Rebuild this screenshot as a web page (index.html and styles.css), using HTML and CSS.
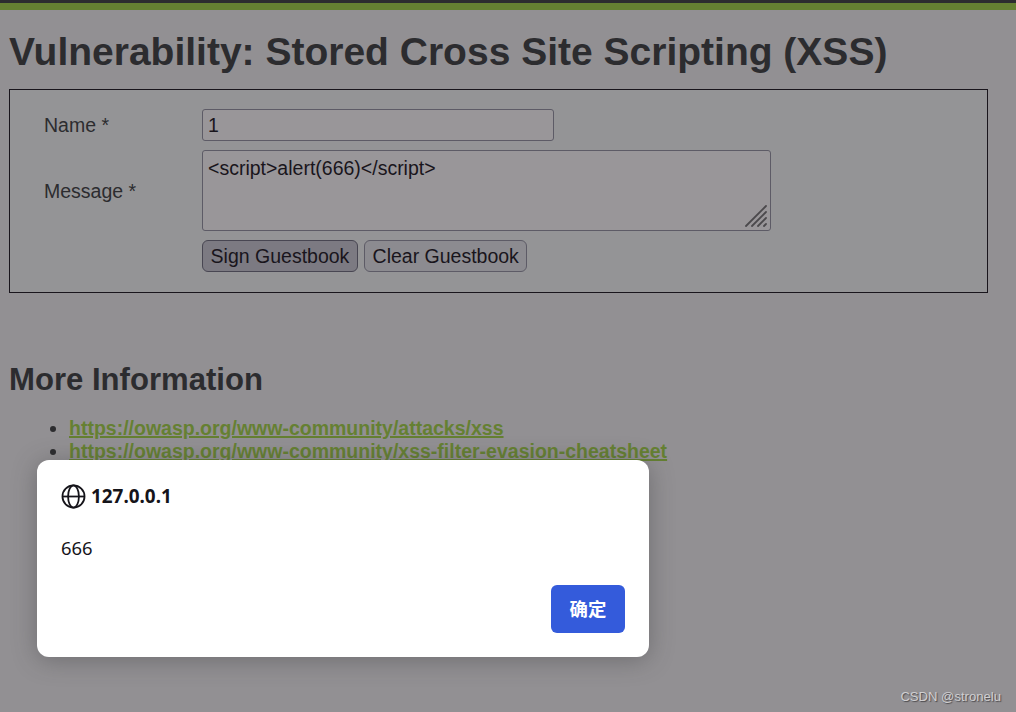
FILE: index.html
```html
<!DOCTYPE html>
<html lang="en">
<head>
    <meta charset="UTF-8">
    <meta name="viewport" content="width=device-width, initial-scale=1.0">
    <title>Vulnerability: Stored Cross Site Scripting (XSS)</title>
    <link rel="stylesheet" href="styles.css">
</head>
<body>
    <header class="top-bar"></header>

    <main class="content">
        <h1>Vulnerability: Stored Cross Site Scripting (XSS)</h1>

        <form class="guestbook">
            <label for="name">Name *</label>
            <input type="text" id="name" value="1">

            <label for="message" class="message-label">Message *</label>
            <div class="message-box">
                <textarea id="message">&lt;script&gt;alert(666)&lt;/script&gt;</textarea>
                <svg class="resizer" viewBox="0 0 24 24">
                    <path d="M2 22 22 2M8 22 22 8M14 22 22 14M20 22 22 20"/>
                </svg>
            </div>

            <div class="buttons">
                <button type="button" class="active">Sign Guestbook</button>
                <button type="button">Clear Guestbook</button>
            </div>
        </form>

        <h2>More Information</h2>
        <ul class="links">
            <li><a href="#">https://owasp.org/www-community/attacks/xss</a></li>
            <li><a href="#">https://owasp.org/www-community/xss-filter-evasion-cheatsheet</a></li>
        </ul>
    </main>

    <!-- Alert dialog -->
    <div class="dialog">
        <div class="dialog-title">
            <svg class="globe" viewBox="0 0 24 24">
                <circle cx="12" cy="12" r="10.6"/>
                <ellipse cx="12" cy="12" rx="5.2" ry="10.6"/>
                <path d="M1.4 12h21.2"/>
            </svg>
            <span>127.0.0.1</span>
        </div>
        <div class="dialog-text">666</div>
        <button type="button" class="ok-button" lang="zh-CN">确定</button>
    </div>

    <div class="watermark">CSDN @stronelu</div>
</body>
</html>
```

FILE: styles.css
```css
* {
    box-sizing: border-box;
}

body {
    margin: 0;
    height: 712px;
    overflow: hidden;
    background-color: #929093;
    color: #2c2c2f;
    font-family: "Liberation Sans", Arial, sans-serif;
    font-size: 19.5px;
}

.top-bar {
    height: 10px;
    background-color: #2c2c2f;
    border-bottom: 7px solid #658032;
}

.content {
    padding: 0 28px 0 9px;
}

h1 {
    margin: 0;
    padding-top: 19px;
    height: 79px;
    font-size: 39px;
    line-height: 45px;
    white-space: nowrap;
}

.guestbook {
    display: grid;
    grid-template-columns: 158px 1fr;
    row-gap: 9px;
    align-items: center;
    justify-items: start;
    height: 204px;
    padding: 19px 34px;
    align-content: start;
    background-color: #949496;
    border: 1px solid #19151c;
}

.message-label {
    padding-top: 2px;
}

.guestbook input,
.guestbook textarea,
.guestbook button {
    display: block;
    margin: 0;
    font: inherit;
    color: #19151c;
    background-color: #999699;
    border: 1px solid #5d5b66;
    border-radius: 3px;
}

.guestbook input {
    width: 352px;
    height: 32px;
    padding: 0 5px;
}

.message-box {
    position: relative;
}

.guestbook textarea {
    width: 569px;
    height: 81px;
    padding: 6px 5px;
    line-height: 23px;
    resize: none;
}

.resizer {
    position: absolute;
    right: 3px;
    bottom: 3px;
    width: 24px;
    height: 24px;
    fill: none;
    stroke: #4b494c;
    stroke-width: 1.8;
    stroke-linecap: round;
}

.buttons {
    grid-column: 2;
    display: flex;
    gap: 6px;
}

.guestbook button {
    height: 32px;
    padding: 0 7.6px;
    background-color: #8c8b90;
    border-radius: 6px;
}

.guestbook button.active {
    background-color: #7c7a82;
    border-color: #484652;
}

h2 {
    margin: 69px 0 19px;
    font-size: 31.1px;
    line-height: 36px;
}

.links {
    margin: 0;
    padding-left: 60px;
    line-height: 23px;
}

.links a {
    color: #658032;
    font-weight: bold;
    text-decoration-thickness: 2px;
}

.dialog {
    position: absolute;
    left: 37px;
    top: 460px;
    width: 612px;
    height: 197px;
    padding: 24px;
    display: flex;
    flex-direction: column;
    background-color: #fff;
    border-radius: 12px;
    color: #15141a;
    box-shadow: 0 3px 24px rgba(58, 58, 60, 0.4);
}

.dialog-title {
    display: flex;
    align-items: center;
    gap: 5px;
    height: 25px;
    font-family: "Noto Sans", sans-serif;
    font-size: 18.9px;
    font-weight: bold;
}

.dialog-title span {
    padding-bottom: 2px;
}

.globe {
    width: 25px;
    height: 25px;
    fill: none;
    stroke: #15141a;
    stroke-width: 1.7;
}

.dialog-text {
    margin-top: 26px;
    height: 26px;
    font-family: "Noto Sans", sans-serif;
    font-size: 18.4px;
    line-height: 25px;
}

.ok-button {
    align-self: flex-end;
    margin-top: auto;
    width: 74px;
    height: 48px;
    padding: 0 0 2px;
    border: none;
    border-radius: 6px;
    background-color: #345bdb;
    color: #fff;
    font-family: "Noto Sans CJK SC", sans-serif;
    font-size: 18.4px;
    font-weight: bold;
}

.watermark {
    position: absolute;
    right: 15px;
    bottom: 7px;
    color: #d0cfd1;
    font-size: 13.1px;
    line-height: 16px;
    text-shadow: 1px 1px 1px #4b494c;
}
```
